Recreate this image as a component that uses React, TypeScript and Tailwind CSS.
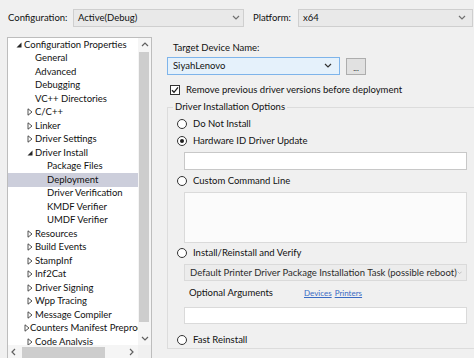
import React from "react";

type Node = { label: string; level: 0 | 1 | 2; kind: "exp" | "col" | "leaf"; selected?: boolean };

const nodes: Node[] = [
  { label: "Configuration Properties", level: 0, kind: "exp" },
  { label: "General", level: 1, kind: "leaf" },
  { label: "Advanced", level: 1, kind: "leaf" },
  { label: "Debugging", level: 1, kind: "leaf" },
  { label: "VC++ Directories", level: 1, kind: "leaf" },
  { label: "C/C++", level: 1, kind: "col" },
  { label: "Linker", level: 1, kind: "col" },
  { label: "Driver Settings", level: 1, kind: "col" },
  { label: "Driver Install", level: 1, kind: "exp" },
  { label: "Package Files", level: 2, kind: "leaf" },
  { label: "Deployment", level: 2, kind: "leaf", selected: true },
  { label: "Driver Verification", level: 2, kind: "leaf" },
  { label: "KMDF Verifier", level: 2, kind: "leaf" },
  { label: "UMDF Verifier", level: 2, kind: "leaf" },
  { label: "Resources", level: 1, kind: "col" },
  { label: "Build Events", level: 1, kind: "col" },
  { label: "StampInf", level: 1, kind: "col" },
  { label: "Inf2Cat", level: 1, kind: "col" },
  { label: "Driver Signing", level: 1, kind: "col" },
  { label: "Wpp Tracing", level: 1, kind: "col" },
  { label: "Message Compiler", level: 1, kind: "col" },
  { label: "Counters Manifest Preprocessor", level: 1, kind: "col" },
  { label: "Code Analysis", level: 1, kind: "col" },
];

const padByLevel = ["pl-[5px]", "pl-[16px]", "pl-[28px]"];

function Chevron({ dir, color = "#606060" }: { dir: "up" | "down" | "left" | "right"; color?: string }) {
  const d =
    dir === "down"
      ? "M1 2 L4 5 L7 2"
      : dir === "up"
      ? "M1 5 L4 2 L7 5"
      : dir === "left"
      ? "M5 1 L2 4 L5 7"
      : "M2 1 L5 4 L2 7";
  return (
    <svg width="8" height="8" viewBox="0 0 8 8">
      <path d={d} fill="none" stroke={color} strokeWidth="1.2" />
    </svg>
  );
}

function Expander({ kind }: { kind: Node["kind"] }) {
  if (kind === "exp")
    return (
      <svg width="6" height="6" viewBox="0 0 6 6">
        <path d="M5.5 0.5 L5.5 5.5 L0.5 5.5 Z" fill="#262626" />
      </svg>
    );
  if (kind === "col")
    return (
      <svg width="6" height="8" viewBox="0 0 6 8">
        <path d="M1 0.8 L5 4 L1 7.2 Z" fill="none" stroke="#404040" strokeWidth="0.9" />
      </svg>
    );
  return null;
}

function Radio({ checked }: { checked?: boolean }) {
  return (
    <span className="flex h-[10px] w-[10px] items-center justify-center rounded-full border border-[#333333] bg-white">
      {checked && <span className="h-[4px] w-[4px] rounded-full bg-[#1f1f1f]" />}
    </span>
  );
}

function RadioRow({ label, checked, mt }: { label: string; checked?: boolean; mt: string }) {
  return (
    <div className={`flex h-[14px] items-center pl-[9px] ${mt}`}>
      <Radio checked={checked} />
      <span className="ml-[6px]">{label}</span>
    </div>
  );
}

export default function App() {
  return (
    <div className="flex h-[358px] w-[474px] flex-col overflow-hidden bg-[#f0f0f0] font-['Lato','Noto_Sans',sans-serif] text-[9.5px] leading-[14px] text-[#111111]">
      {/* top bar */}
      <div className="mt-[9px] flex h-[18px] items-center pl-[8px]">
        <span className="w-[65px] whitespace-nowrap">Configuration:</span>
        <div className="flex h-[18px] w-[171px] items-center justify-between border border-[#cfcfcf] bg-[#e9e9e9] pl-[4px] pr-[3px]">
          <span>Active(Debug)</span>
          <Chevron dir="down" color="#707070" />
        </div>
        <span className="ml-[9px] w-[45px]">Platform:</span>
        <div className="flex h-[18px] w-[175px] items-center justify-between border border-[#cfcfcf] bg-[#e9e9e9] pl-[4px] pr-[6px]">
          <span>x64</span>
          <Chevron dir="down" color="#707070" />
        </div>
      </div>

      {/* body */}
      <div className="mt-[10px] flex">
        {/* tree panel */}
        <div className="ml-[7px] flex h-[322px] w-[145px] flex-col border border-[#bdbdbd] bg-white">
          <div className="flex h-[307px]">
            <div className="w-[130px] overflow-hidden">
              {nodes.map((n) => (
                <div
                  key={n.label}
                  className={`flex h-[13.5px] items-center whitespace-nowrap ${padByLevel[n.level]} ${
                    n.selected ? "bg-[#cccedb]" : ""
                  }`}
                >
                  <span className="flex w-[11px] items-center justify-center">
                    <Expander kind={n.kind} />
                  </span>
                  <span>{n.label}</span>
                </div>
              ))}
            </div>
            <div className="flex w-[13px] flex-col bg-[#f5f5f5]">
              <div className="flex h-[13px] items-center justify-center">
                <Chevron dir="up" />
              </div>
              <div className="ml-[1px] mt-[1px] h-[270px] w-[10px] bg-[#cdcdcd]" />
              <div className="flex-1" />
              <div className="flex h-[13px] items-center justify-center">
                <Chevron dir="down" />
              </div>
            </div>
          </div>
          <div className="flex h-[13px] bg-[#f5f5f5]">
            <div className="flex w-[12px] items-center justify-center">
              <Chevron dir="left" />
            </div>
            <div className="ml-[2px] mt-[2px] h-[11px] w-[83px] bg-[#cdcdcd]" />
            <div className="flex-1" />
            <div className="flex w-[13px] items-center justify-center">
              <Chevron dir="right" />
            </div>
            <div className="w-[13px] bg-[#f0f0f0]" />
          </div>
        </div>

        {/* right panel */}
        <div className="ml-[15px] flex flex-col">
          <div className="ml-[6px] mt-[4px] flex h-[14px] items-center">Target Device Name:</div>
          <div className="mt-[2px] flex">
            <div className="flex h-[18px] w-[173px] items-center justify-between border border-[#7eb4ea] bg-[#e5f1fb] pl-[5px] pr-[7px]">
              <span>SiyahLenovo</span>
              <Chevron dir="down" color="#333333" />
            </div>
            <div className="ml-[6px] mt-[1px] flex h-[17px] w-[20px] items-end justify-center border border-[#adadad] bg-[#e1e1e1] pb-[2px] text-[8px] leading-[8px]">
              ...
            </div>
          </div>
          <div className="mt-[8px] flex h-[14px] items-center">
            <span className="ml-[3px] flex h-[10px] w-[10px] items-center justify-center border border-[#333333] bg-white">
              <svg width="8" height="8" viewBox="0 0 8 8">
                <path d="M1 4.2 L3 6.3 L7 1.3" fill="none" stroke="#1f1f1f" strokeWidth="1.3" />
              </svg>
            </span>
            <span className="ml-[6px]">Remove previous driver versions before deployment</span>
          </div>

          <fieldset className="mt-[3px] w-[320px] border border-[#dcdcdc] pb-[1px]">
            <legend className="ml-[5px] px-[2px] leading-[14px]">Driver Installation Options</legend>
            <RadioRow label="Do Not Install" mt="mt-[3px]" />
            <RadioRow label="Hardware ID Driver Update" checked mt="mt-[3px]" />
            <div className="ml-[16px] mt-[4px] h-[18px] w-[283px] border border-[#c8c8c8] bg-white" />
            <RadioRow label="Custom Command Line" mt="mt-[4px]" />
            <div className="ml-[16px] mt-[4px] h-[51px] w-[283px] border border-[#dadada] bg-[#fbfbfb]" />
            <RadioRow label="Install/Reinstall and Verify" mt="mt-[3px]" />
            <div className="ml-[16px] mt-[4px] flex h-[17px] w-[283px] items-center justify-between border border-[#dadada] bg-[#ececec] pl-[5px] pr-[4px] text-[#2b2b2b]">
              <span className="whitespace-nowrap">Default Printer Driver Package Installation Task (possible reboot)</span>
              <Chevron dir="down" color="#b0b0b0" />
            </div>
            <div className="mt-[5px] flex h-[14px] items-center pl-[21px]">
              <span className="w-[115px]">Optional Arguments</span>
              <span className="text-[8px] text-[#3a6bc4] underline">Devices</span>
              <span className="ml-[3px] text-[8px] text-[#3a6bc4] underline">Printers</span>
            </div>
            <div className="ml-[16px] mt-[7px] h-[17px] w-[283px] border border-[#dadada] bg-white" />
            <RadioRow label="Fast Reinstall" mt="mt-[9px]" />
          </fieldset>
        </div>
      </div>
    </div>
  );
}
